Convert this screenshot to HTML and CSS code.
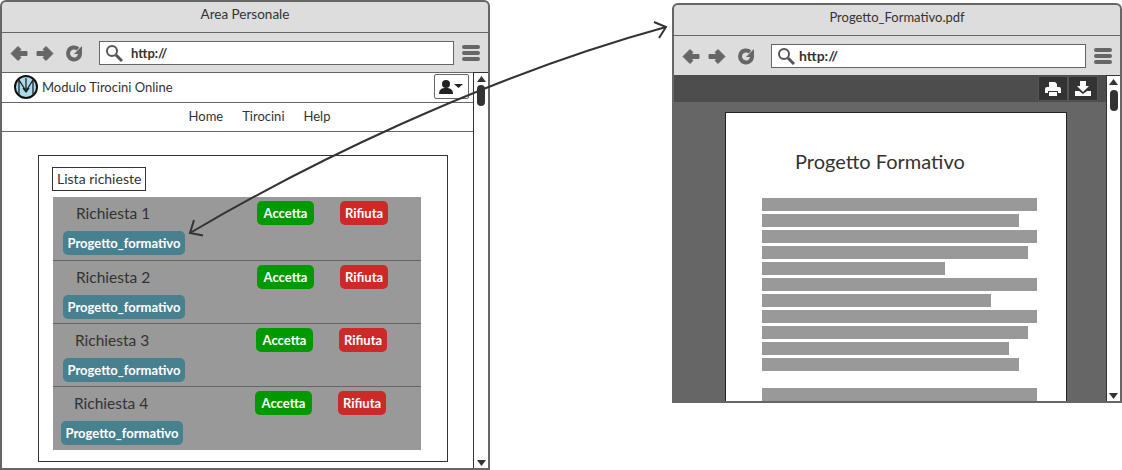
FILE: index.html
```html
<!DOCTYPE html>
<html lang="en">
<head>
  <meta charset="UTF-8">
  <title>Area Personale</title>
  <link rel="stylesheet" href="styles.css">
</head>
<body>
  <section class="window window-left">
    <div class="titlebar">Area Personale</div>
    <div class="toolbar">
      <svg class="nav-icons" width="72" height="20" viewBox="0 0 72 20">
        <path d="M1 10.500 8 3.500 11 6.500 8.500 8.500H17V12.500H8.500L11 14.500 8 17.500z" fill="#666" stroke="#666"/>
        <path d="M43 10.500 36 3.500 33 6.500 35.500 8.500H27V12.500H35.500L33 14.500 36 17.500z" fill="#666" stroke="#666"/>
        <path d="M70 10.500a6 6 0 1 1-2-4.500" fill="none" stroke="#666" stroke-width="4"/>
        <path d="M72 3v8h-8z" fill="#666"/>
      </svg>
      <div class="address">
        <svg width="18" height="18" viewBox="0 0 18 18"><circle cx="7" cy="7" r="5" fill="none" stroke="#555" stroke-width="2"/><path d="M11 11l6 6" stroke="#555" stroke-width="3"/></svg>
        <span>http://</span>
      </div>
      <div class="burger"><i></i><i></i><i></i></div>
    </div>
    <div class="viewport">
      <div class="content">
        <div class="brand-row">
          <svg class="logo" width="24" height="24" viewBox="0 0 24 24">
            <circle cx="12" cy="12" r="11" fill="#a8dcec" stroke="#111" stroke-width="2"/>
            <path d="M5 20V5l7 11 7-11v15M12 3v14M9 13l3 4 3-4" fill="none" stroke="#222" stroke-width="1.300"/>
          </svg>
          <span>Modulo Tirocini Online</span>
          <button class="user-btn">
            <svg width="30" height="16" viewBox="0 0 30 16"><circle cx="9" cy="5" r="4" fill="#222"/><path d="M2 15c0-5 3-6 7-6s7 1 7 6z" fill="#222"/><path d="M17 5h9l-4.500 4z" fill="#222"/></svg>
          </button>
        </div>
        <nav class="menu">
          <a>Home</a>
          <a>Tirocini</a>
          <a>Help</a>
        </nav>
        <div class="panel">
          <div class="panel-label">Lista richieste</div>
          <div class="list">
            <div class="row">
              <div class="row-top"><span class="name">Richiesta 1</span><span class="btn btn-ok">Accetta</span><span class="btn btn-no">Rifiuta</span></div>
              <span class="btn btn-doc">Progetto_formativo</span>
            </div>
            <div class="row">
              <div class="row-top"><span class="name">Richiesta 2</span><span class="btn btn-ok">Accetta</span><span class="btn btn-no">Rifiuta</span></div>
              <span class="btn btn-doc">Progetto_formativo</span>
            </div>
            <div class="row row-3">
              <div class="row-top"><span class="name">Richiesta 3</span><span class="btn btn-ok">Accetta</span><span class="btn btn-no">Rifiuta</span></div>
              <span class="btn btn-doc">Progetto_formativo</span>
            </div>
            <div class="row row-4">
              <div class="row-top"><span class="name">Richiesta 4</span><span class="btn btn-ok">Accetta</span><span class="btn btn-no">Rifiuta</span></div>
              <span class="btn btn-doc">Progetto_formativo</span>
            </div>
          </div>
        </div>
      </div>
      <div class="scrollbar">
        <svg width="9" height="6" viewBox="0 0 9 6"><path d="M0 6 4.500 0 9 6z" fill="#333"/></svg>
        <div class="thumb"></div>
        <svg class="arrow-down" width="9" height="6" viewBox="0 0 9 6"><path d="M0 0h9L4.500 6z" fill="#333"/></svg>
      </div>
    </div>
  </section>

  <section class="window window-right">
    <div class="titlebar">Progetto_Formativo.pdf</div>
    <div class="toolbar">
      <svg class="nav-icons" width="72" height="20" viewBox="0 0 72 20">
        <path d="M1 10.500 8 3.500 11 6.500 8.500 8.500H17V12.500H8.500L11 14.500 8 17.500z" fill="#666" stroke="#666"/>
        <path d="M43 10.500 36 3.500 33 6.500 35.500 8.500H27V12.500H35.500L33 14.500 36 17.500z" fill="#666" stroke="#666"/>
        <path d="M70 10.500a6 6 0 1 1-2-4.500" fill="none" stroke="#666" stroke-width="4"/>
        <path d="M72 3v8h-8z" fill="#666"/>
      </svg>
      <div class="address">
        <svg width="18" height="18" viewBox="0 0 18 18"><circle cx="7" cy="7" r="5" fill="none" stroke="#555" stroke-width="2"/><path d="M11 11l6 6" stroke="#555" stroke-width="3"/></svg>
        <span>http://</span>
      </div>
      <div class="burger"><i></i><i></i><i></i></div>
    </div>
    <div class="viewport">
      <div class="content pdf">
        <div class="pdf-bar">
          <div class="pdf-tools">
            <span class="pdf-tool">
              <svg width="16" height="14" viewBox="0 0 16 14"><path d="M4 0h6l2 2v3H4z" fill="#fff"/><path d="M2 5h12q2 0 2 2v4h-3V9H3v2H0V7q0-2 2-2zM4 10h8v4H4z" fill="#fff"/></svg>
            </span>
            <span class="pdf-tool">
              <svg width="16" height="15" viewBox="0 0 16 15"><path d="M5 0h6v5h3l-6 6-6-6h3z" fill="#fff"/><path d="M0 10h4l4 3 4-3h4v5H0z" fill="#fff"/></svg>
            </span>
          </div>
        </div>
        <div class="pdf-body">
          <div class="page">
            <h1>Progetto Formativo</h1>
            <div class="lines">
              <i class="w275"></i>
              <i class="w257"></i>
              <i class="w275"></i>
              <i class="w266"></i>
              <i class="w183"></i>
              <i class="w275"></i>
              <i class="w229"></i>
              <i class="w275"></i>
              <i class="w266"></i>
              <i class="w247"></i>
              <i class="w257"></i>
              <i class="w275 para"></i>
            </div>
          </div>
        </div>
      </div>
      <div class="scrollbar">
        <svg width="9" height="6" viewBox="0 0 9 6"><path d="M0 6 4.500 0 9 6z" fill="#333"/></svg>
        <div class="thumb"></div>
        <svg class="arrow-down" width="9" height="6" viewBox="0 0 9 6"><path d="M0 0h9L4.500 6z" fill="#333"/></svg>
      </div>
    </div>
  </section>

  <svg class="link-arrow" width="1122" height="470" viewBox="0 0 1122 470">
    <path d="M190 233C300 168 480 78 666 27" fill="none" stroke="#333" stroke-width="2"/>
    <path d="M194 220 190 233 203 235.500M654 22 666 27 659 38" fill="none" stroke="#333" stroke-width="2"/>
  </svg>
</body>
</html>
```

FILE: styles.css
```css
* {
  box-sizing: border-box;
}
body {
  margin: 0;
  width: 1122px;
  height: 470px;
  position: relative;
  overflow: hidden;
  background-color: #fff;
  font-family: Lato, sans-serif;
  font-size: 13px;
  color: #333;
}
.window {
  position: absolute;
  display: flex;
  flex-direction: column;
  border: 2px solid #666;
  border-radius: 6px 6px 0 0;
  background-color: #ddd;
  overflow: hidden;
}
.window-left {
  left: 0;
  top: 0;
  width: 490px;
  height: 470px;
}
.window-right {
  left: 672px;
  top: 3px;
  width: 450px;
  height: 400px;
}
.titlebar {
  height: 31px;
  padding-top: 4px;
  text-align: center;
  font-size: 13.500px;
  border-bottom: 1px solid #666;
  flex-shrink: 0;
}
.window-right .titlebar {
  font-size: 13px;
}
.toolbar {
  height: 39px;
  display: flex;
  align-items: center;
  padding-left: 8px;
  flex-shrink: 0;
}
.nav-icons {
  flex-shrink: 0;
}
.address {
  margin-left: 17px;
  flex: 1;
  height: 24px;
  display: flex;
  align-items: center;
  gap: 8px;
  padding-left: 5px;
  background-color: #fff;
  border: 1px solid #666;
  font-weight: 700;
}
.window-right .address {
  gap: 4px;
  font-size: 14px;
}
.burger {
  width: 18px;
  margin: 0 8px 0 8px;
  display: flex;
  flex-direction: column;
  gap: 2px;
}
.burger i {
  height: 4px;
  border-radius: 2px;
  background-color: #666;
}
.viewport {
  flex: 1;
  display: flex;
  min-height: 0;
  background-color: #fff;
}
.content {
  flex: 1;
  min-width: 0;
  overflow: hidden;
}
.brand-row {
  height: 31px;
  display: flex;
  align-items: center;
  padding: 0 4px 2px 12px;
  gap: 4px;
  border-bottom: 1px solid #666;
  border-top: 1px solid #666;
}
.user-btn {
  margin-left: auto;
  width: 35px;
  height: 25px;
  padding: 0;
  display: flex;
  align-items: center;
  justify-content: center;
  background: #fff;
  border: 1px solid #666;
  border-radius: 2px;
}
.menu {
  height: 29px;
  display: flex;
  justify-content: center;
  align-items: center;
  gap: 19px;
  border-bottom: 1px solid #666;
  padding: 0 0 2px 44px;
}
.panel {
  margin: 23px 25px 0 36px;
  height: 307px;
  border: 1px solid #333;
  padding: 11px 26px 0 13px;
}
.panel-label {
  width: 94px;
  height: 24px;
  line-height: 21px;
  padding-left: 4px;
  border: 1px solid #333;
  margin-bottom: 6px;
  font-size: 14px;
}
.list {
  margin-left: 1px;
}
.row {
  height: 63px;
  padding: 4px 0 0 10px;
  background-color: #999;
  border-bottom: 1px solid #666;
}
.row:first-child {
  height: 64px;
}
.row:last-child {
  border-bottom: 0;
}
.row-top {
  display: flex;
  align-items: center;
  height: 24px;
  margin-bottom: 6px;
  padding-left: 13px;
}
.name {
  width: 181px;
  font-size: 15.500px;
}
.btn {
  display: inline-flex;
  align-items: center;
  justify-content: center;
  height: 24px;
  border-radius: 5px;
  color: #fff;
  font-size: 13px;
  font-weight: 700;
}
.btn-ok {
  width: 57px;
  margin-right: 26px;
  background-color: #090;
}
.btn-no {
  width: 48px;
  background-color: #cc2929;
}
.btn-doc {
  width: 122px;
  background-color: #47808f;
}
.row-3 .row-top {
  padding-left: 12px;
}
.row-4 {
  padding-left: 8px;
}
.row-4 .row-top {
  padding-left: 13px;
}
.scrollbar {
  width: 15px;
  flex-shrink: 0;
  display: flex;
  flex-direction: column;
  align-items: center;
  padding: 3px 0 2px;
  background-color: #fff;
  border-left: 1px solid #333;
  border-top: 1px solid #333;
}
.window-right .scrollbar {
  width: 14px;
}
.window-right .thumb {
  margin-top: 5px;
}
.thumb {
  width: 8px;
  height: 21px;
  margin-top: 3px;
  border-radius: 4px;
  background-color: #333;
}
.arrow-down {
  margin-top: auto;
}
.pdf {
  display: flex;
  flex-direction: column;
  background-color: #666;
}
.pdf-bar {
  height: 27px;
  display: flex;
  justify-content: flex-end;
  align-items: center;
  padding-right: 8px;
  background-color: #4d4d4d;
  flex-shrink: 0;
}
.pdf-tools {
  display: flex;
}
.pdf-tool {
  width: 30px;
  height: 25px;
  display: flex;
  align-items: center;
  justify-content: center;
  background-color: #333;
  border: 1px solid #555;
}
.pdf-body {
  flex: 1;
  padding: 10px 39px 0 51px;
  min-height: 0;
}
.page {
  height: 100%;
  padding: 37px 0 0 36px;
  background-color: #fff;
  border: 1px solid #222;
  border-bottom: 0;
  overflow: hidden;
}
.page h1 {
  margin: 0 0 25px 33px;
  font-size: 20px;
  line-height: 23px;
  font-weight: 400;
}
.lines {
  display: flex;
  flex-direction: column;
  gap: 3px;
}
.lines i {
  display: block;
  height: 13px;
  background-color: #999;
}
.lines .para {
  margin-top: 14px;
}
.w275 { width: 275px; }
.w266 { width: 266px; }
.w257 { width: 257px; }
.w247 { width: 247px; }
.w229 { width: 229px; }
.w183 { width: 183px; }
.link-arrow {
  position: absolute;
  left: 0;
  top: 0;
  pointer-events: none;
}
```
